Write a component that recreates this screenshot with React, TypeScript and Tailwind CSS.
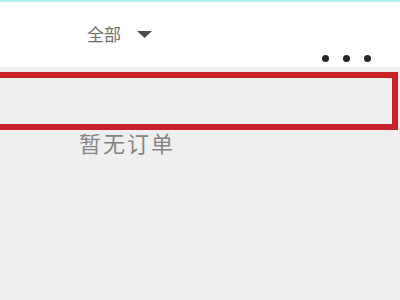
const Caret = () => (
  <svg width="15" height="7" viewBox="0 0 15 7" className="ml-[16px]">
    <path d="M0 0 L15 0 L7.5 7 Z" fill="#4a4a4a" />
  </svg>
);

const Dots = () => (
  <div className="flex gap-[14px] pr-[29px]">
    <span className="w-[7px] h-[7px] rounded-full bg-[#262626]" />
    <span className="w-[7px] h-[7px] rounded-full bg-[#262626]" />
    <span className="w-[7px] h-[7px] rounded-full bg-[#262626]" />
  </div>
);

export default function App() {
  return (
    <div
      className="relative w-[400px] h-[300px] overflow-hidden bg-[#f0eff0]"
      style={{ fontFamily: '"Noto Sans CJK SC", "Noto Sans", sans-serif' }}
    >
      {/* top strip */}
      <div className="h-[2px] bg-[#b3f3f4]" />

      {/* header */}
      <div className="h-[65px] bg-white flex flex-col">
        <div className="flex items-center pl-[87px] pt-[20px]">
          <span className="text-[17px] leading-[24px] text-[#6e6e6e]">全部</span>
          <Caret />
        </div>
        <div className="flex justify-end mt-auto mb-[5px]">
          <Dots />
        </div>
      </div>

      {/* empty state */}
      <div className="pt-[60px] pl-[79px]">
        <span className="text-[22px] leading-[30px] tracking-[2px] text-[#858585]">暂无订单</span>
      </div>

      {/* highlight annotation */}
      <div className="absolute left-[-12px] top-[72px] w-[410px] h-[58px] border-[6px] border-[#c8232a]" />
    </div>
  );
}
